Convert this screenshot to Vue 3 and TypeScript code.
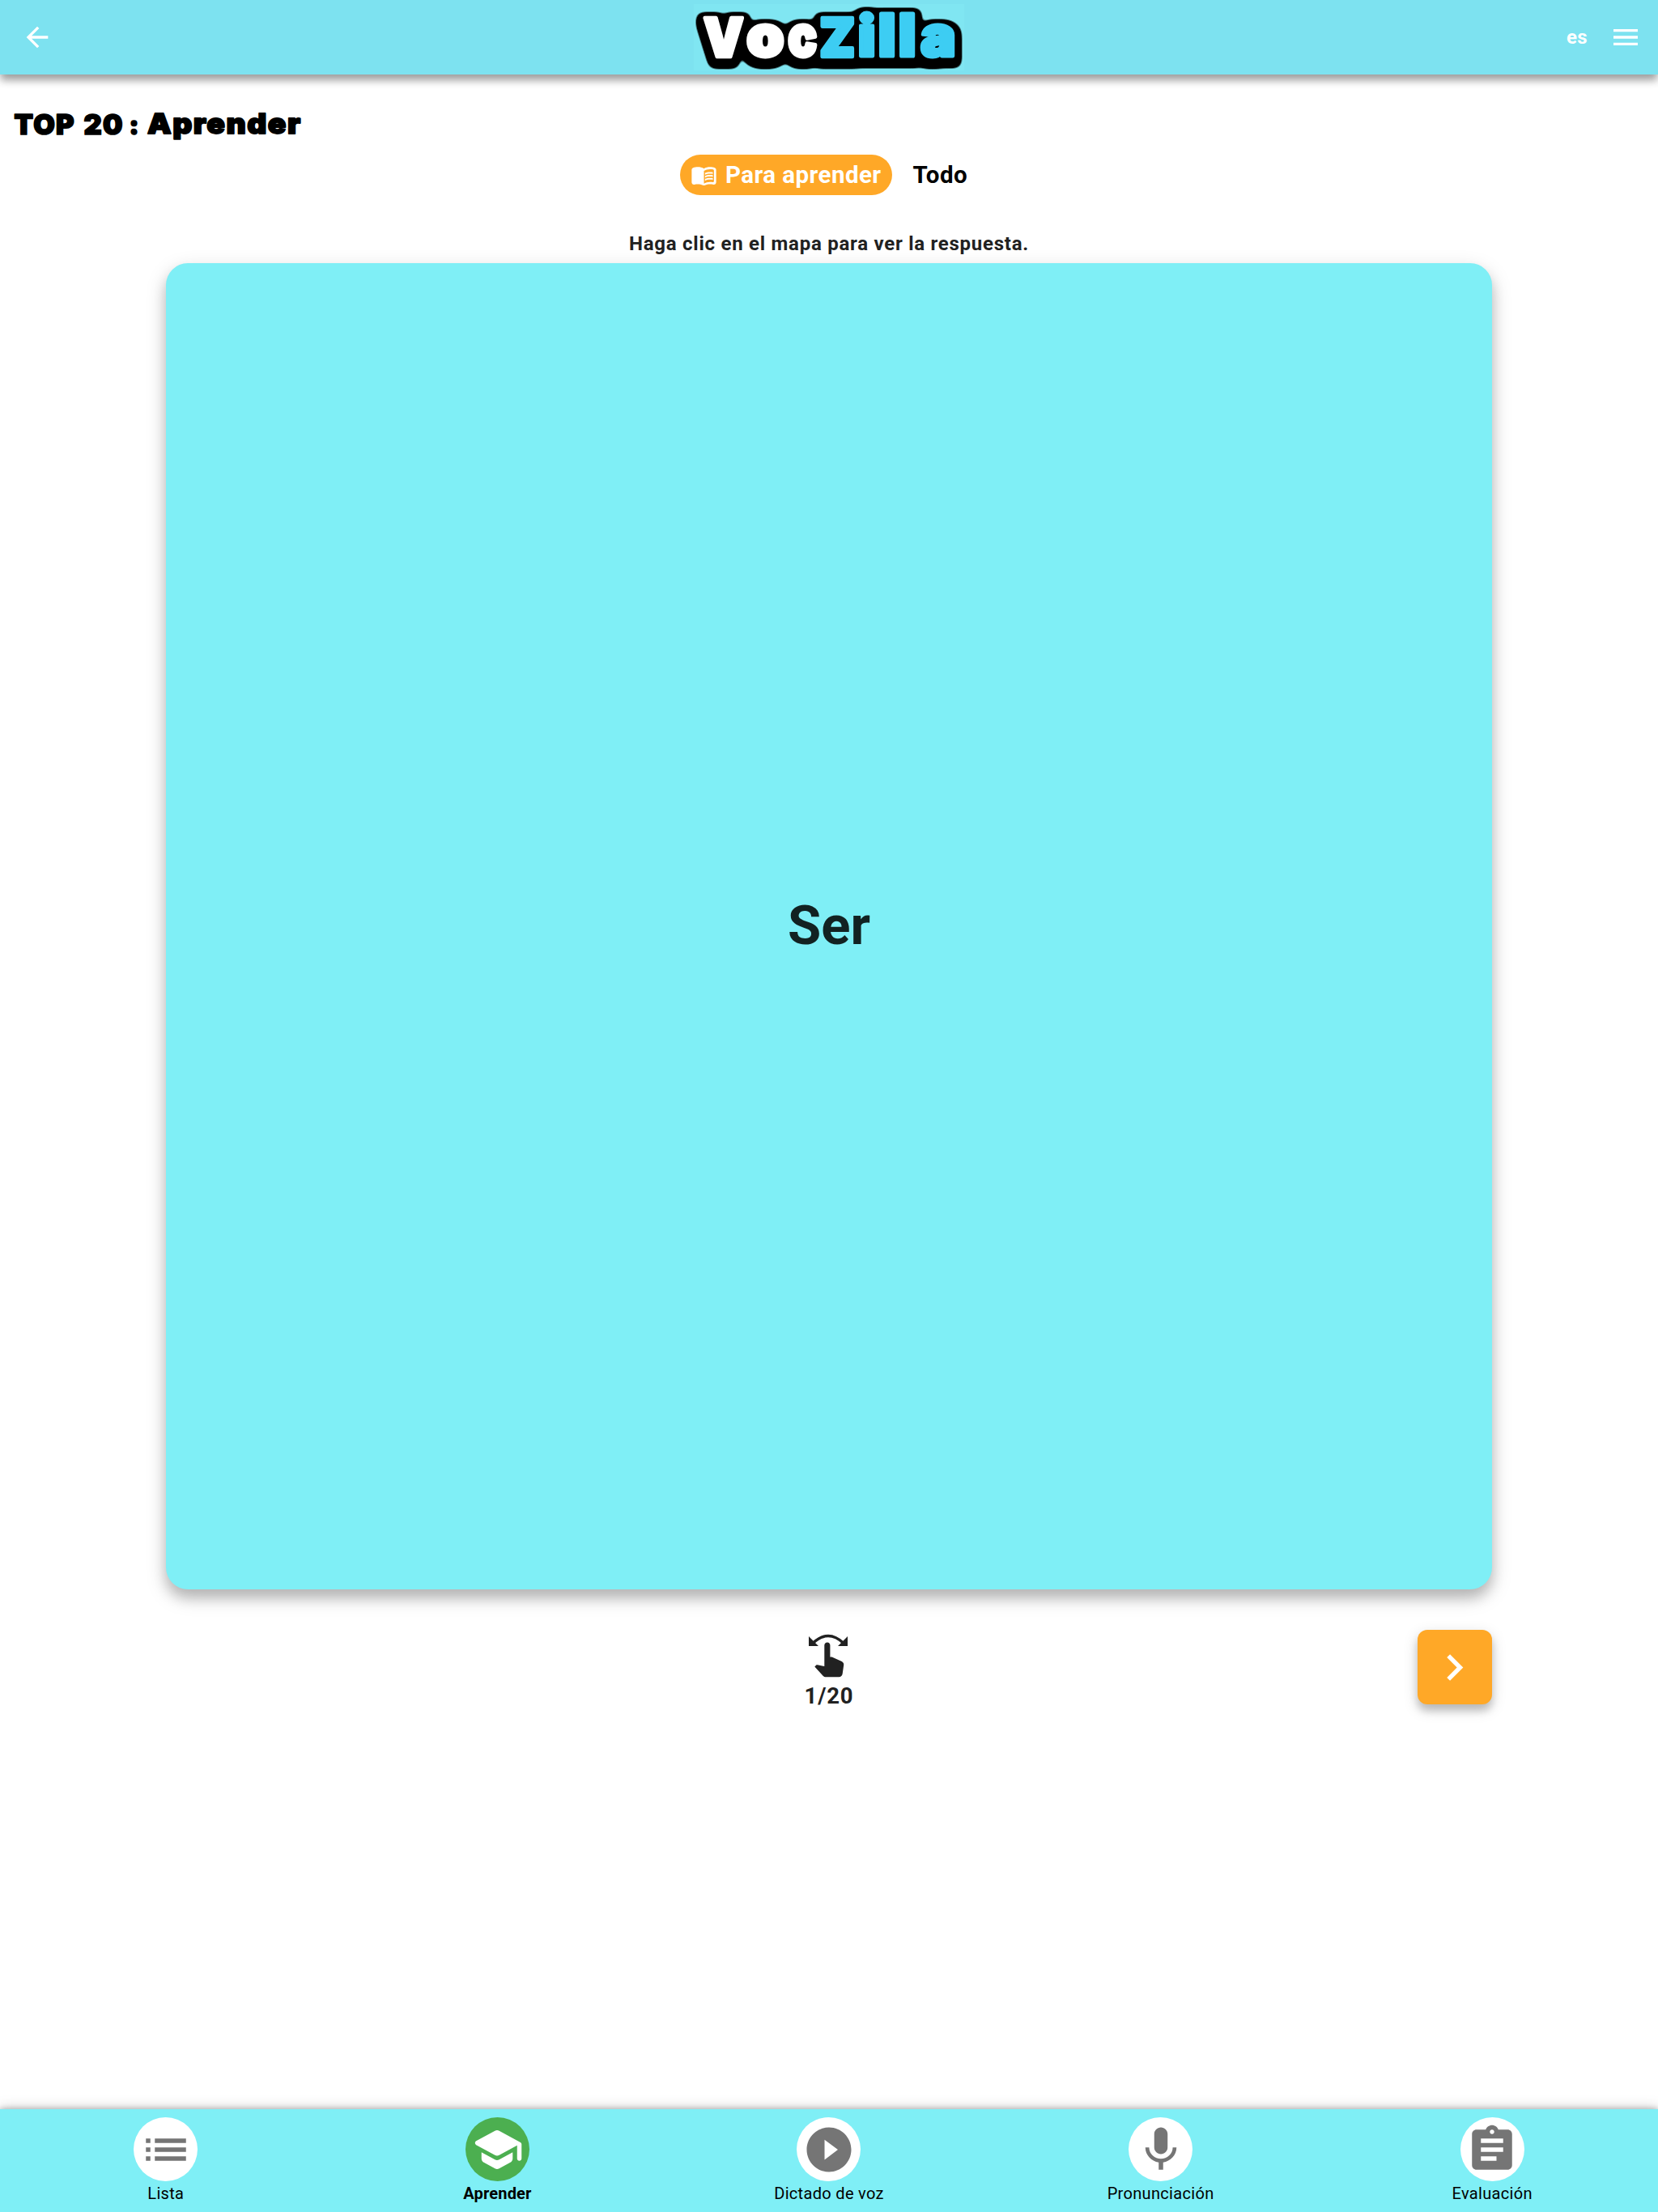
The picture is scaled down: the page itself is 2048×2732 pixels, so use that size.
<script setup lang="ts">
interface Box { text: string; x: number; y: number; w: number; h: number }
interface Glyph { text: string; transform: string }
interface Tab { label: string; path: string; active?: boolean }

const DISPLAY = '"Inter", sans-serif'
const ctx = document.createElement('canvas').getContext('2d')!

// Places text so that its painted bounds, outline included, fill the given box.
function fit(box: Box, size: number, stroke: number, spacing = 0): Glyph {
  ctx.font = `900 ${size}px ${DISPLAY}`
  ctx.letterSpacing = `${spacing}px`
  const m = ctx.measureText(box.text)
  const w = m.actualBoundingBoxLeft + m.actualBoundingBoxRight + stroke
  const h = m.actualBoundingBoxAscent + m.actualBoundingBoxDescent + stroke
  const sx = box.w / w
  const sy = box.h / h
  const tx = box.x + (m.actualBoundingBoxLeft + stroke / 2) * sx
  const ty = box.y + (m.actualBoundingBoxAscent + stroke / 2) * sy
  return { text: box.text, transform: `translate(${tx} ${ty}) scale(${sx} ${sy})` }
}

const logo = ([
  { text: 'V', x: 11, y: 14, w: 52, h: 53 },
  { text: 'o', x: 65, y: 23, w: 47, h: 44 },
  { text: 'c', x: 116, y: 23, w: 37, h: 44 },
  { text: 'Z', x: 156, y: 14, w: 43, h: 53 },
  { text: 'i', x: 203.5, y: 9, w: 20.5, h: 57.5 },
  { text: 'l', x: 228.5, y: 9, w: 20.5, h: 57.5 },
  { text: 'l', x: 253.5, y: 9, w: 20.5, h: 57.5 },
  { text: 'a', x: 279, y: 23, w: 44, h: 44 },
] as Box[]).map((b) => fit(b, 70, 5))

const title = ([
  { text: 'TOP', x: 0.5, y: 5, w: 76, h: 27 },
  { text: '20', x: 87.5, y: 5, w: 48, h: 27 },
  { text: ':', x: 145.5, y: 12.5, w: 9, h: 19 },
  { text: 'Aprender', x: 165, y: 3.5, w: 191, h: 34.5 },
] as Box[]).map((b) => fit(b, 35, 1.8, 1.4))

const tabs: Tab[] = [
  { label: 'Lista', path: 'M3 13h2v-2H3v2zm0 4h2v-2H3v2zm0-8h2V7H3v2zm4 4h14v-2H7v2zm0 4h14v-2H7v2zM7 7v2h14V7H7z' },
  { label: 'Aprender', active: true, path: 'M5 13.18v2.81c0 .73.4 1.41 1.04 1.76l5 2.73c.6.33 1.32.33 1.92 0l5-2.73c.64-.35 1.04-1.03 1.04-1.76v-2.81l-6.04 3.3c-.6.33-1.32.33-1.92 0L5 13.18zm6.04-9.66l-8.43 4.6c-.69.38-.69 1.38 0 1.76l8.43 4.6c.6.33 1.32.33 1.92 0L21 10.09V16c0 .55.45 1 1 1s1-.45 1-1V9.59c0-.37-.2-.7-.52-.88l-9.52-5.19c-.6-.32-1.32-.32-1.92 0z' },
  { label: 'Dictado de voz', path: 'M12 2C6.48 2 2 6.48 2 12s4.48 10 10 10 10-4.48 10-10S17.52 2 12 2zm-2 14.5v-9l6 4.5-6 4.5z' },
  { label: 'Pronunciación', path: 'M12 14c1.66 0 2.99-1.34 2.99-3L15 5c0-1.66-1.34-3-3-3S9 3.34 9 5v6c0 1.66 1.34 3 3 3zm5.3-3c0 3-2.54 5.1-5.3 5.1S6.7 14 6.7 11H5c0 3.41 2.72 6.23 6 6.72V21h2v-3.28c3.28-.48 6-3.3 6-6.72h-1.7z' },
  { label: 'Evaluación', path: 'M19 3h-4.18C14.4 1.84 13.3 1 12 1c-1.3 0-2.4.84-2.82 2H5c-1.1 0-2 .9-2 2v14c0 1.1.9 2 2 2h14c1.1 0 2-.9 2-2V5c0-1.1-.9-2-2-2zm-7 0c.55 0 1 .45 1 1s-.45 1-1 1-1-.45-1-1 .45-1 1-1zm2 14H7v-2h7v2zm3-4H7v-2h10v2zm0-4H7V7h10v2z' },
]
</script>

<template>
  <div class="page">
    <header class="bar">
      <svg class="icon40" viewBox="0 0 24 24"><path d="M20 11H7.83l5.59-5.59L12 4l-8 8 8 8 1.41-1.41L7.83 13H20v-2z" /></svg>
      <svg class="logo" width="334" height="82" viewBox="0 0 334 82" role="img" aria-label="VocZilla">
        <defs>
          <!-- Rounded black contour: dilate, then blur and threshold the edge. -->
          <filter id="contour" filterUnits="userSpaceOnUse" x="-10" y="-10" width="354" height="102" color-interpolation-filters="sRGB">
            <feMorphology in="SourceAlpha" operator="dilate" radius="5" result="fat" />
            <feGaussianBlur in="fat" stdDeviation="4" />
            <feOffset dy="3.5" />
            <feComponentTransfer result="edge"><feFuncA type="linear" slope="9" intercept="-1.1" /></feComponentTransfer>
            <feMerge><feMergeNode in="edge" /><feMergeNode in="SourceGraphic" /></feMerge>
          </filter>
        </defs>
        <g filter="url(#contour)">
          <text v-for="(g, i) in logo" :key="i" :class="i < 3 ? 'voc' : 'zilla'" :transform="g.transform">{{ g.text }}</text>
        </g>
      </svg>
      <div class="actions">
        <span class="lang">es</span>
        <svg class="icon40" viewBox="0 0 24 24"><path d="M3 18h18v-2H3v2zm0-5h18v-2H3v2zm0-7v2h18V6H3z" /></svg>
      </div>
    </header>

    <main>
      <h1>
        <svg width="360" height="44" viewBox="0 0 360 44">
          <text v-for="(g, i) in title" :key="i" :transform="g.transform">{{ g.text }}</text>
        </svg>
      </h1>

      <div class="filters">
        <button class="filter on">
          <svg viewBox="0 0 24 24">
            <path fill-rule="evenodd" d="M17.5 4.5c-1.95 0-4.05.4-5.5 1.5-1.45-1.1-3.55-1.5-5.5-1.5-1.45 0-2.99.22-4.28.79C1.49 5.62 1 6.33 1 7.14v11.28c0 1.3 1.22 2.26 2.48 1.94.98-.25 2.02-.36 3.02-.36 1.56 0 3.22.26 4.56.92.6.3 1.28.3 1.87 0 1.34-.67 3-.92 4.56-.92 1 0 2.04.11 3.02.36 1.26.33 2.48-.63 2.48-1.94V7.14c0-.81-.49-1.52-1.22-1.85-1.28-.57-2.82-.79-4.27-.79zM21 17.23c0 .63-.58 1.09-1.2.98-.75-.14-1.53-.2-2.3-.2-1.7 0-4.15.65-5.5 1.5V8c1.35-.85 3.8-1.5 5.5-1.5.92 0 1.83.09 2.7.28.46.1.8.51.8.98v9.47z" />
            <path d="M17.5 10.5c.88 0 1.73.09 2.5.26V9.24c-.79-.15-1.64-.24-2.5-.24-1.7 0-3.24.29-4.5.83v1.66c1.13-.64 2.7-.99 4.5-.99zM13 12.49v1.66c1.13-.64 2.7-.99 4.5-.99.88 0 1.73.09 2.5.26V11.9c-.79-.15-1.64-.24-2.5-.24-1.7 0-3.24.3-4.5.83zM17.5 14.33c-1.7 0-3.24.29-4.5.83v1.66c1.13-.64 2.7-.99 4.5-.99.88 0 1.73.09 2.5.26v-1.52c-.79-.16-1.64-.24-2.5-.24z" />
          </svg>
          <span>Para aprender</span>
        </button>
        <button class="filter"><span>Todo</span></button>
      </div>

      <p class="hint">Haga clic en el mapa para ver la respuesta.</p>
      <section class="card"><span>Ser</span></section>

      <div class="controls">
        <div class="progress">
          <svg width="50" height="54" viewBox="0 0 50 54">
            <path class="arc" d="M6 11.5Q25 -6.5 44 11.5" />
            <path d="M1 3v12h12zM49 3v12H37z" />
            <path d="M20.3 14c0-2.1 1.6-3.6 3.6-3.6s3.5 1.5 3.5 3.6v14.5h2.2l11.6 5.3c2.2 1 3.3 2.6 3 4.8l-1.5 10.4c-.3 2.6-2 4.3-4.5 4.3H22.2c-1.3 0-2.5-.5-3.4-1.4L8.3 40.6l1.7-1.8c.5-.5 1.1-.6 1.8-.5l8.5 1.8z" />
          </svg>
          <span>1/20</span>
        </div>
        <button class="next"><svg viewBox="0 0 24 24"><path d="M10 6 8.59 7.41 13.17 12l-4.58 4.59L10 18l6-6z" /></svg></button>
      </div>
    </main>

    <nav class="tabs">
      <div v-for="t in tabs" :key="t.label" class="tab" :class="{ active: t.active }">
        <span class="disc"><svg viewBox="0 0 24 24"><path :d="t.path" /></svg></span>
        <span class="label">{{ t.label }}</span>
      </div>
    </nav>
  </div>
</template>

<style>
body { margin: 0; background: #fff; }
</style>

<style scoped>
.page {
  display: flex;
  flex-direction: column;
  height: 2732px;
  overflow: hidden;
  font-family: Roboto, sans-serif;
  background: #fff;
}
svg { display: block; fill: currentColor; overflow: visible; }
button { border: 0; background: none; font: inherit; color: inherit; }

.bar {
  display: grid;
  grid-template-columns: 1fr 334px 1fr;
  align-items: center;
  height: 92px;
  padding: 0 20px 0 26px;
  box-sizing: border-box;
  color: #fff;
  background: #7de2f0;
  box-shadow: 0 8px 9px -1px rgba(0, 0, 0, .3), 0 4px 14px rgba(0, 0, 0, .15);
}
.icon40 { width: 40px; height: 40px; }
.logo { background: #80e6f2; margin-left: -3px; }
.logo text { font: 900 70px "Inter", sans-serif; stroke-width: 5; stroke-linejoin: round; }
.logo .voc { fill: #fff; stroke: #fff; }
.logo .zilla { fill: #3dcdf3; stroke: #3dcdf3; }
.actions { display: flex; justify-content: flex-end; align-items: center; gap: 27px; }
.lang { font-size: 24px; font-weight: 700; letter-spacing: .4px; }

main { flex: 1; display: flex; flex-direction: column; align-items: center; }
h1 { align-self: flex-start; margin: 43px 0 0 16px; height: 44px; color: #000; }
h1 text {
  font: 900 35px "Inter", sans-serif;
  letter-spacing: 1.4px;
  stroke: #000;
  stroke-width: 1.8;
  stroke-linejoin: round;
}

.filters { display: flex; gap: 13px; margin-top: 12px; height: 50px; }
.filter {
  display: flex;
  align-items: center;
  gap: 10px;
  padding: 0 13px;
  border-radius: 25px;
  color: #000;
  font-size: 29.5px;
  font-weight: 700;
  letter-spacing: .45px;
}
.filter.on { color: #fff; background: #ffa827; }
.filter svg { width: 33px; height: 33px; }

.hint {
  margin: 46px 0 0;
  height: 38px;
  line-height: 28px;
  color: #212121;
  font-size: 24px;
  font-weight: 700;
  letter-spacing: .74px;
}
.card {
  display: flex;
  align-items: center;
  justify-content: center;
  width: 80vw;
  height: 80vw;
  border-radius: 27px;
  background: #7feff6;
  color: #122222;
  font-size: 67px;
  font-weight: 700;
  box-shadow: 0 11px 15px rgba(0, 0, 0, .17), 0 9px 26px rgba(0, 0, 0, .18);
}
.card span { padding-bottom: 2px; }

.controls {
  display: grid;
  grid-template-columns: 1fr auto 1fr;
  width: 80vw;
  margin-top: 50px;
  color: #212121;
}
.progress {
  grid-column: 2;
  display: flex;
  flex-direction: column;
  align-items: center;
  padding-top: 5px;
  font-size: 27.5px;
  font-weight: 700;
  line-height: 32px;
  letter-spacing: .8px;
}
.progress svg { margin-left: -1px; }
.progress span { margin-top: 7px; }
.arc { fill: none; stroke: currentColor; stroke-width: 3.5; }
.next {
  justify-self: end;
  display: grid;
  place-items: center;
  width: 92px;
  height: 92px;
  padding: 0;
  border-radius: 12px;
  color: #fff;
  background: #ffa827;
  box-shadow: 0 8px 10px rgba(0, 0, 0, .17), 0 6px 18px rgba(0, 0, 0, .17);
}
.next svg { width: 65px; height: 65px; margin-left: -1px; }

.tabs {
  display: grid;
  grid-template-columns: repeat(5, 1fr);
  height: 127px;
  background: #7feff6;
  box-shadow: 0 0 7px rgba(0, 0, 0, .28), 0 0 16px rgba(0, 0, 0, .22);
}
.tab { display: flex; flex-direction: column; align-items: center; padding-top: 10px; }
.disc {
  display: grid;
  place-items: center;
  width: 79px;
  height: 79px;
  border-radius: 50%;
  color: #757575;
  background: #fff;
}
.disc svg { width: 66px; height: 66px; }
.label { margin-top: 3px; font-size: 20px; line-height: 24px; letter-spacing: .32px; color: #000; }
.active .disc { color: #fff; background: #4caf50; }
.active .label { font-weight: 700; letter-spacing: .2px; }
</style>
